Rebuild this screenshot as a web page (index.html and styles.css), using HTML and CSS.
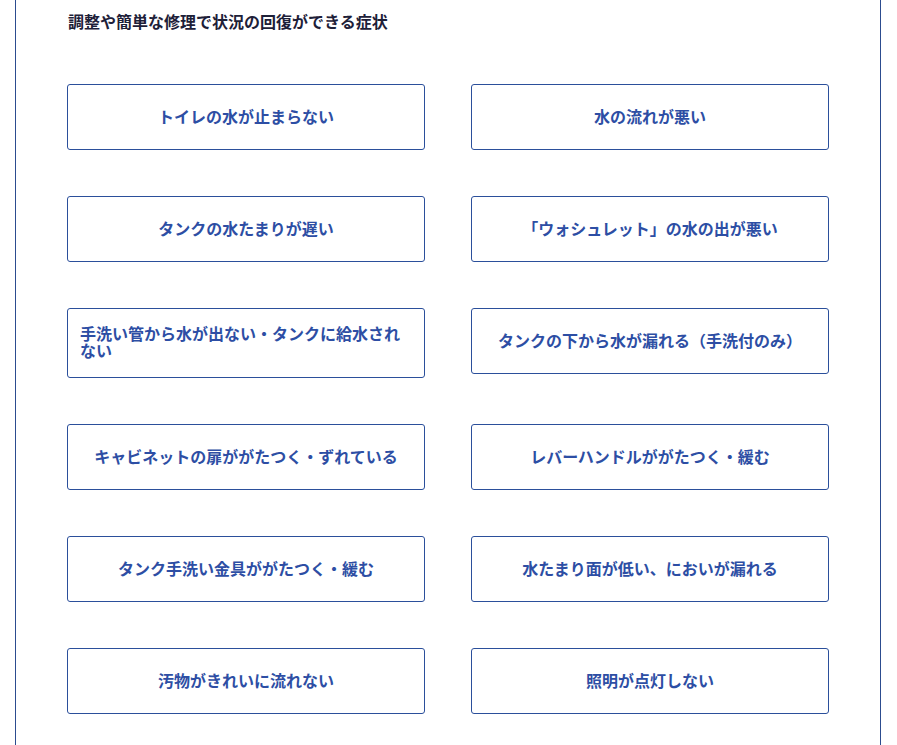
FILE: index.html
```html
<!DOCTYPE html>
<html lang="ja">
<head>
<meta charset="utf-8">
<link rel="stylesheet" href="styles.css">
</head>
<body>
<div class="panel">
  <h2 class="title">調整や簡単な修理で状況の回復ができる症状</h2>
  <div class="grid">
    <a class="btn"><span>トイレの水が止まらない</span></a>
    <a class="btn"><span>水の流れが悪い</span></a>
    <a class="btn"><span>タンクの水たまりが遅い</span></a>
    <a class="btn"><span>「ウォシュレット」の水の出が悪い</span></a>
    <a class="btn"><span>手洗い管から水が出ない・タンクに給水されない</span></a>
    <a class="btn"><span>タンクの下から水が漏れる（手洗付のみ）</span></a>
    <a class="btn"><span>キャビネットの扉ががたつく・ずれている</span></a>
    <a class="btn"><span>レバーハンドルががたつく・緩む</span></a>
    <a class="btn"><span>タンク手洗い金具ががたつく・緩む</span></a>
    <a class="btn"><span>水たまり面が低い、においが漏れる</span></a>
    <a class="btn"><span>汚物がきれいに流れない</span></a>
    <a class="btn"><span>照明が点灯しない</span></a>
  </div>
</div>
</body>
</html>
```

FILE: styles.css
```css
html, body {
  margin: 0;
  padding: 0;
  background: #ffffff;
}
body {
  font-family: "Noto Sans CJK JP", "Noto Sans", sans-serif;
}
.panel {
  margin: 0 16px 0 15px;
  border-left: 1px solid #2c4c8f;
  border-right: 1px solid #2c4c8f;
  padding: 9px 51px 60px 51px;
  min-height: 800px;
  box-sizing: border-box;
}
.title {
  margin: 0 0 0 1px;
  font-size: 16px;
  line-height: 24px;
  font-weight: 700;
  color: #1d2038;
}
.grid {
  margin-top: 51px;
  display: grid;
  grid-template-columns: 358px 358px;
  column-gap: 46px;
  row-gap: 46px;
  align-items: start;
}
.btn {
  box-sizing: border-box;
  min-height: 66px;
  border: 1px solid #2b4f9b;
  border-radius: 3px;
  padding: 16px 12px 18px;
  display: flex;
  align-items: center;
  justify-content: center;
  color: #2d4ea4;
  font-size: 16px;
  font-weight: 700;
  line-height: 17px;
  text-decoration: none;
  background: #ffffff;
}
.btn span {
  text-align: left;
}
```
